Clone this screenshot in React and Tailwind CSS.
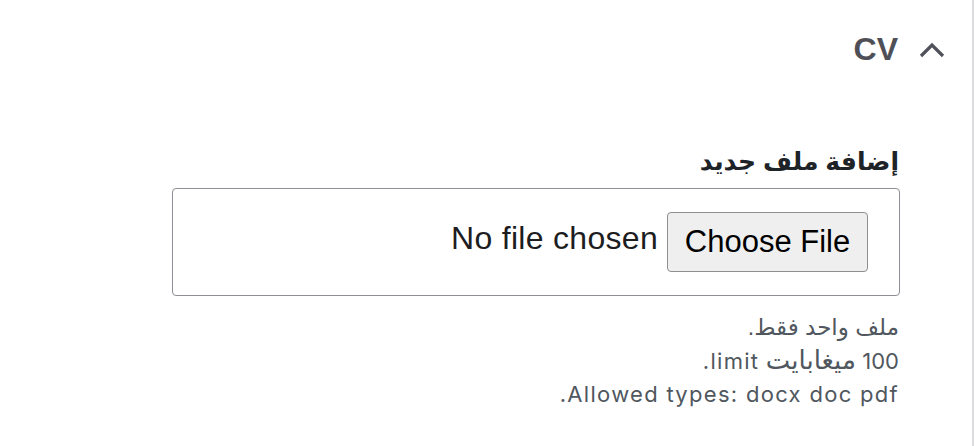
export default function App() {
  return (
    <div className="h-[446px] w-full bg-white border-r-2 border-[#dcdcde] font-['Liberation_Sans','DejaVu_Sans',sans-serif] overflow-hidden">
      <div dir="rtl">
        {/* section header */}
        <div className="flex items-center gap-[21px] pr-[27px] pt-[29px]">
          <svg width="26" height="16" viewBox="0 0 26 16" className="mt-[1px]">
            <path d="M2 14 L13 3 L24 14" fill="none" stroke="#50515a" strokeWidth="3.2" />
          </svg>
          <h2 className="text-[32px] leading-[40px] font-bold text-[#4f4f57]">CV</h2>
        </div>

        <div className="pr-[73px] pt-[74px]">
          <label className="block text-[25px] leading-[36px] font-bold text-[#1d2327]">
            إضافة ملف جديد
          </label>

          <div className="mt-[9px] mr-[-1px] w-[728px] h-[108px] border border-[#8c8f94] rounded-[4px] flex items-center pr-[31px]">
            <span className="inline-flex items-center justify-center w-[201px] h-[60px] border border-[#8f8f8f] rounded-[4px] bg-[#efefef] text-[31px] text-black">
              Choose File
            </span>
            <span className="mr-[9px] mb-[8px] text-[32px] tracking-[0.3px] text-[#1d1d1f]">No file chosen</span>
          </div>

          <div className="mt-[15px] text-[23px] leading-[33px] text-[#50575e]">
            <div>ملف واحد فقط.</div>
            <div>
              <span className="font-['Inter'] text-[22px] tracking-[1.3px]">100</span>{" "}
              <span className="text-[26px]">ميغابايت</span>{" "}
              <span className="font-['Inter'] text-[22px] tracking-[1.3px]">limit.</span>
            </div>
            <div>
              <span className="font-['Inter'] text-[22px] tracking-[1.3px]">Allowed types: docx doc pdf.</span>
            </div>
          </div>
        </div>
      </div>
    </div>
  );
}
